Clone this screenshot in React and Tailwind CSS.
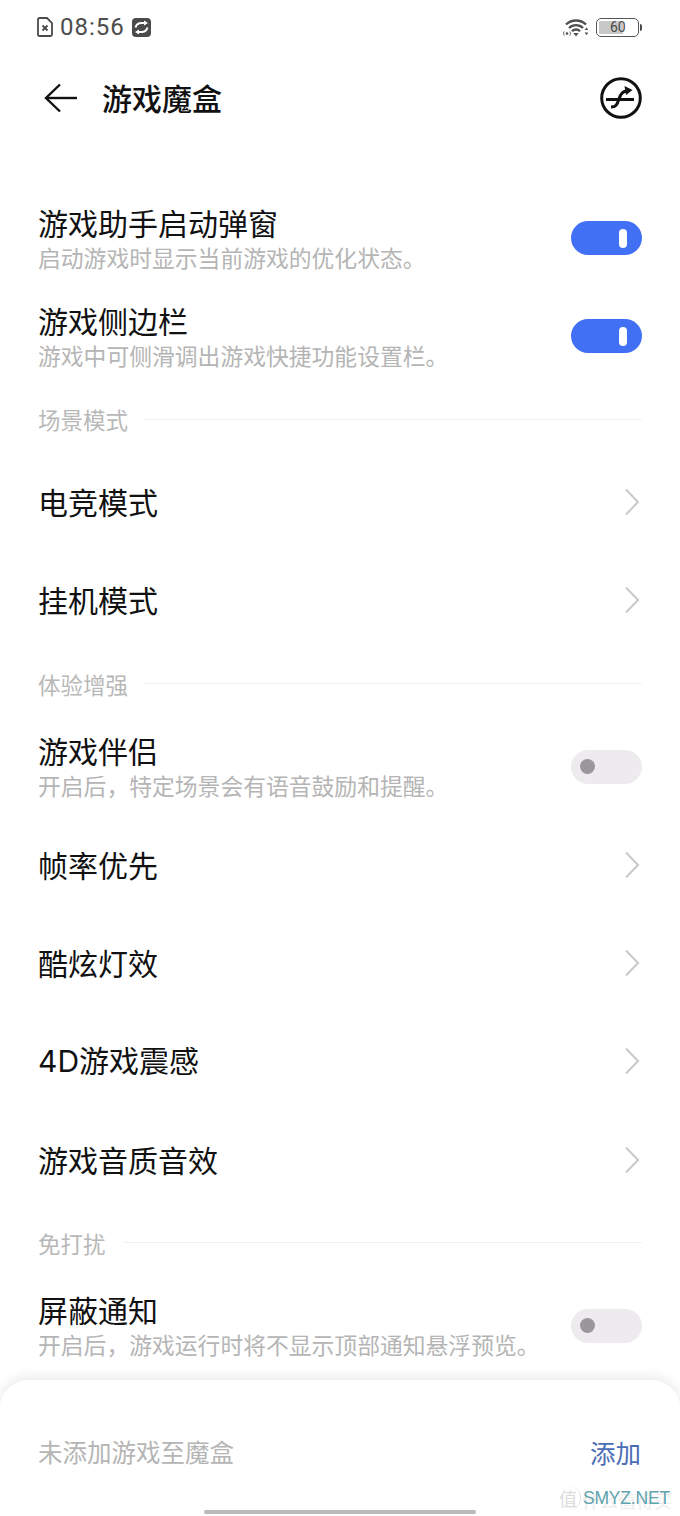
const FONT = "font-['Noto_Sans_CJK_SC','Noto_Sans',sans-serif]";

function Toggle({ on }) {
  if (on) {
    return (
      <div className="flex h-[34px] w-[71px] shrink-0 items-center justify-end rounded-full bg-[#4170f5] pr-[15px]">
        <div className="h-[19px] w-[8px] rounded-full bg-white" />
      </div>
    );
  }
  return (
    <div className="flex h-[34px] w-[71px] shrink-0 items-center rounded-full bg-[#eeebee] pl-[9px]">
      <div className="h-[15px] w-[15px] rounded-full bg-[#9a979a]" />
    </div>
  );
}

function SwitchRow({ title, sub, on }) {
  return (
    <div className="flex h-[98px] shrink-0 items-center justify-between pl-[38px] pr-[38px]">
      <div className="flex flex-col pt-[3px]">
        <div className="h-[36px] text-[30px] leading-[36px] text-[#111]">{title}</div>
        <div className="h-[36px] text-[22.8px] leading-[36px] text-[#b5b5b5]">{sub}</div>
      </div>
      <Toggle on={on} />
    </div>
  );
}

function NavRow({ title }) {
  return (
    <div className="flex h-[98.3px] shrink-0 items-center justify-between pl-[38px] pr-[40px]">
      <div className="pb-[2px] text-[30px] leading-[36px] text-[#111]">{title}</div>
      <svg width="16" height="28" viewBox="0 0 16 28" fill="none" stroke="#c9c9c9" strokeWidth="2">
        <path d="M2 1.5 L14 14 L2 26.5" />
      </svg>
    </div>
  );
}

function Section({ title }) {
  return (
    <div className="flex h-[68px] shrink-0 items-center gap-[17px] pl-[38px] pr-[38px]">
      <div className="text-[22.5px] leading-[30px] text-[#b8b8b8]">{title}</div>
      <div className="h-px flex-1 bg-[#f1f1f1]" />
    </div>
  );
}

function StatusBar() {
  return (
    <div className="flex h-[54px] shrink-0 items-center justify-between pl-[37px] pr-[38px]">
      <div className="flex items-center gap-[7px]">
        <svg width="16" height="20" viewBox="0 0 16 20" fill="none">
          <path d="M2.5 1h7.5L15 6v11.500a1.500 1.500 0 0 1-1.500 1.500h-11A1.500 1.500 0 0 1 1 17.500V2.500A1.500 1.500 0 0 1 2.500 1Z" stroke="#4a4a4a" strokeWidth="1.800" />
          <path d="M5.500 8.500l5 5M10.500 8.500l-5 5" stroke="#4a4a4a" strokeWidth="1.800" />
        </svg>
        <span className="font-['Roboto','Noto_Sans',sans-serif] text-[24px] leading-[28px] tracking-[1px] text-[#4c4c4c]">08:56</span>
        <svg width="19" height="19" viewBox="0 0 19 19" fill="none">
          <rect width="19" height="19" rx="4" fill="#4a4a4a" />
          <path d="M3.500 9.500c.8-3 3-4.500 6-4.500h3.500" stroke="#fff" strokeWidth="2" />
          <path d="M15.500 9.500c-.8 3-3 4.500-6 4.500H6" stroke="#fff" strokeWidth="2" />
          <path d="M12 2.500l4 2.500-4 2.500ZM7 11.500l-4 2.500 4 2.500Z" fill="#fff" />
        </svg>
      </div>
      <div className="flex items-center gap-[8px]">
        <svg width="26" height="19" viewBox="0 0 26 19" fill="none" stroke="#505050" strokeWidth="2.400">
          <path d="M4 6.500a14.500 14.500 0 0 1 20 0" />
          <path d="M7 10a10 10 0 0 1 14 0" />
          <path d="M10 13.300a5.500 5.500 0 0 1 8 0" />
          <path d="M11.300 15h5.400L14 18.500Z" fill="#505050" stroke="none" />
          <path d="M24.500 9.500l-2 2.500h4ZM22.500 14.500h4l-2 2.500Z" fill="#505050" stroke="none" />
          <circle cx="5" cy="15.500" r="1.300" fill="#505050" stroke="none" />
          <path d="M2.200 13.500c-.8 1.300-.8 2.700 0 4M7.800 13.500c.8 1.300.8 2.700 0 4" strokeWidth="1" />
        </svg>
        <div className="flex items-center">
          <div className="relative flex h-[19px] w-[43px] items-center overflow-hidden rounded-[5px] border border-[#555] bg-white">
            <div className="ml-[2px] h-[13px] w-[24px] rounded-[1px] bg-[#c8c8c8]" />
            <span className="absolute left-[13px] top-0 font-['Roboto',sans-serif] text-[14px] leading-[17px] text-[#4a4a4a]">60</span>
          </div>
          <div className="ml-[1px] h-[7px] w-[2px] rounded-r-sm bg-[#4a4a4a]" />
        </div>
      </div>
    </div>
  );
}

function Header() {
  return (
    <div className="flex h-[88px] shrink-0 items-center justify-between pl-[44px] pr-[38px]">
      <div className="flex items-center gap-[25px]">
        <svg width="33" height="30" viewBox="0 0 33 30" fill="none" stroke="#111" strokeWidth="2.400">
          <path d="M16 1.500 L2 15 L16 28.500" />
          <path d="M2 15 H33" />
        </svg>
        <div className="pb-[3px] text-[30px] font-medium leading-[36px] text-[#111]">游戏魔盒</div>
      </div>
      <svg width="42" height="42" viewBox="0 0 42 42" fill="none" stroke="#111">
        <circle cx="21" cy="21" r="19.300" strokeWidth="3" />
        <path d="M6 22.500 H34" strokeWidth="3" />
        <path d="M11 30c5 0 6-2 8-8 1.500-5 3.500-8 8-8" strokeWidth="3" />
        <path d="M24.500 9l8 4-6.500 5Z" fill="#111" stroke="none" />
      </svg>
    </div>
  );
}

export default function App() {
  return (
    <div className={`relative flex h-[1516px] w-[680px] flex-col overflow-hidden bg-white ${FONT}`}>
      <StatusBar />
      <Header />
      <div className="h-[47px] shrink-0" />
      <SwitchRow title="游戏助手启动弹窗" sub="启动游戏时显示当前游戏的优化状态。" on />
      <SwitchRow title="游戏侧边栏" sub="游戏中可侧滑调出游戏快捷功能设置栏。" on />
      <Section title="场景模式" />
      <NavRow title="电竞模式" />
      <NavRow title="挂机模式" />
      <Section title="体验增强" />
      <SwitchRow title="游戏伴侣" sub="开启后，特定场景会有语音鼓励和提醒。" />
      <NavRow title="帧率优先" />
      <NavRow title="酷炫灯效" />
      <NavRow title={<><span className="font-['Inter',sans-serif]">4D</span>游戏震感</>} />
      <NavRow title="游戏音质音效" />
      <Section title="免打扰" />
      <SwitchRow title="屏蔽通知" sub="开启后，游戏运行时将不显示顶部通知悬浮预览。" />
      <div className="relative mt-[5px] flex flex-1 flex-col rounded-t-[28px] bg-white shadow-[0_-3px_12px_rgba(0,0,0,0.09)]">
        <div className="flex h-[136px] items-center justify-between pl-[38px] pr-[39px] pt-[8px]">
          <div className="text-[24.500px] leading-[32px] text-[#b5b5b5]">未添加游戏至魔盒</div>
          <div className="text-[25.500px] leading-[32px] text-[#4a6db5]">添加</div>
        </div>
        <div className="absolute bottom-[2px] left-[204px] h-[4px] w-[272px] rounded-full bg-[#b9b9b9]" />
        <div className="absolute bottom-[6px] left-[556px] flex items-center whitespace-nowrap">
          <span className="flex h-[24px] w-[25px] shrink-0 items-center justify-center rounded-full border-r border-[#e2e2e2] text-[18px] leading-none text-[#dcdcdc]">值</span>
          <span className="absolute left-[26px] top-[2px] text-[18px] leading-[24px] text-[#ededed]">什么值得买</span>
          <span className="relative ml-[2px] font-['Liberation_Sans',sans-serif] text-[17.500px] leading-[24px] tracking-[-0.2px] text-[#5fa3ad]">SMYZ.NET</span>
        </div>
      </div>
    </div>
  );
}
